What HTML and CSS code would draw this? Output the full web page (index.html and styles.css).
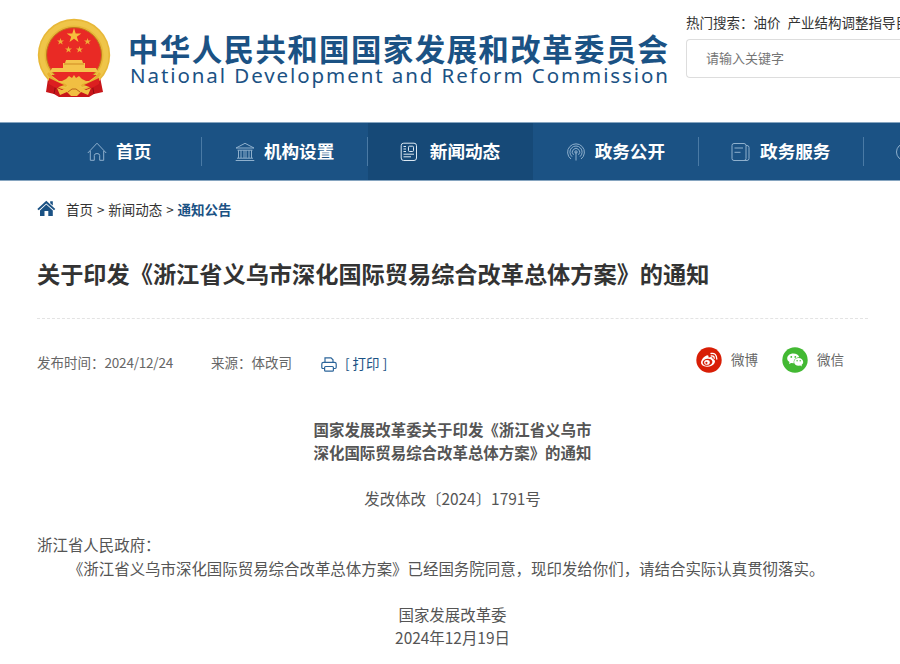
FILE: index.html
```html
<!DOCTYPE html>
<html lang="zh-CN">
<head>
    <meta charset="UTF-8">
    <meta name="viewport" content="width=device-width, initial-scale=1.0">
    <title>关于印发《浙江省义乌市深化国际贸易综合改革总体方案》的通知</title>
    <link rel="stylesheet" href="styles.css">
</head>
<body>
    <header class="header">
        <a class="logo">
            <svg class="emblem" viewBox="0 0 74 80" width="74" height="80">
                <path d="M12 54 L9 74 L17 76 L22 79 H52 L57 76 L66 74 L62 54 Z" fill="#c8161a"/>
                <path d="M12 58 L19 66 L17 76 M62 58 L55 66 L57 76" stroke="#8f0d12" stroke-width="1" fill="none"/>
                <circle cx="37" cy="37" r="36.2" fill="#e8b838"/>
                <circle cx="37" cy="37" r="32" fill="none" stroke="#efc549" stroke-width="5"/>
                <circle cx="37" cy="37" r="27.5" fill="#e92a25" stroke="#bf7a1c" stroke-width="1"/>
                <path d="M37 10 L38.7 15.4 H44.3 L39.8 18.7 L41.5 24 L37 20.7 L32.5 24 L34.2 18.7 L29.7 15.4 H35.3 Z" fill="#f6bf3c"/>
                <g fill="#f0ae38">
                    <path id="star" d="M23.5 20 L24.3 22.5 H27 L24.9 24.1 L25.7 26.5 L23.5 25 L21.3 26.5 L22.1 24.1 L20 22.5 H22.7 Z"/>
                    <use href="#star" x="27"/>
                    <use href="#star" x="8" y="8"/>
                    <use href="#star" x="19" y="8"/>
                </g>
                <path d="M29 42 H45 L46 45 H48 V50 H59 L61 54 H13 L15 50 H26 V45 H28 Z" fill="#f4c44c"/>
                <path d="M27 46 H47" stroke="#cf8a22" stroke-width="1"/>
                <path d="M14 57 H60 L52 63 H22 Z" fill="#e92a25"/>
                <path d="M12 54 Q19 66 31 66 L29 69 Q15 66 10 56 Z M62 54 Q55 66 43 66 L45 69 Q59 66 64 56 Z" fill="#e5af30"/>
                <path d="M29 61 L32 58 L35 60 L37 57 L39 60 L42 58 L45 61 L49 63 L42 69 H32 L25 63 Z" fill="#f1bf42"/>
                <path d="M12 60 L27 67 L19 70 L12 66 Z M62 60 L47 67 L55 70 L62 66 Z" fill="#dc1f20"/>
                <path d="M20 70 L25 72 L31 69 H43 L49 72 L54 70 L51 77 L44 74 L40 78 H34 L30 74 L23 77 Z" fill="#f1bf42"/>
                <path d="M31 74 L35 71 H39 L43 74" stroke="#b9651a" stroke-width="1" fill="none"/>
            </svg>
            <span class="logo-text">
                <span class="logo-cn">中华人民共和国国家发展和改革委员会</span>
                <span class="logo-en">National Development and Reform Commission</span>
            </span>
        </a>
        <div class="search">
            <div class="hot"><span>热门搜索：</span><a>油价</a><a class="hot-link">产业结构调整指导目录</a></div>
            <input class="search-input" type="text" placeholder="请输入关键字">
        </div>
    </header>

    <nav class="nav">
        <a class="nav-item">
            <svg class="nav-icon" viewBox="0 0 20 20" width="20" height="20"><path d="M.8 11 L10 1.2 L19.2 11 M3.3 9 V18.3 H7.3 V13.5 Q7.3 11.5 10 11.5 Q12.7 11.5 12.7 13.5 V18.3 H16.7 V9"/></svg>
            <span>首页</span>
        </a>
        <a class="nav-item">
            <svg class="nav-icon" viewBox="0 0 20 20" width="20" height="20"><path d="M1 6 L10 1.3 L19 6 Z M2.5 8.2 H17.5 M3.5 8.2 V16 M6 8.2 V16 M9 8.2 V16 M11 8.2 V16 M14 8.2 V16 M16.5 8.2 V16 M2 16.2 H18 M.7 18.5 H19.3"/></svg>
            <span>机构设置</span>
        </a>
        <a class="nav-item active">
            <svg class="nav-icon" viewBox="0 0 20 20" width="20" height="20"><rect x="2.2" y="1.2" width="15.3" height="17.3" rx="2.5"/><rect x="9.5" y="4.2" width="5" height="5.3" rx="1"/><path d="M4.5 4.5 H7 M4.5 7 H7 M4.5 9.5 H7 M4.5 12.2 H15 M4.5 14.8 H12"/></svg>
            <span>新闻动态</span>
        </a>
        <a class="nav-item">
            <svg class="nav-icon" viewBox="0 0 20 20" width="20" height="20"><path d="M10 10 V18.5 M5 17 A8.4 8.4 0 1 1 15 17 M6 14.7 A6.1 6.1 0 1 1 14 14.7 M7.5 12.8 A3.7 3.7 0 1 1 12.5 12.8"/><circle cx="10" cy="10" r="1.2"/></svg>
            <span>政务公开</span>
        </a>
        <a class="nav-item">
            <svg class="nav-icon" viewBox="0 0 20 20" width="20" height="20"><rect x="1" y="1.5" width="14" height="17" rx="2"/><path d="M3.5 6 H12 M3.5 10.3 H9.5 M15 3.5 H16 Q18 3.5 18 5.5 V16.5 Q18 18.5 16 18.5 H12.5"/></svg>
            <span>政务服务</span>
        </a>
        <a class="nav-item nav-last">
            <svg class="nav-icon" viewBox="0 0 20 20" width="20" height="20"><circle cx="10" cy="10" r="8.5"/></svg>
        </a>
    </nav>

    <main class="main">
        <div class="crumbs">
            <svg class="home-icon" viewBox="0 0 19 17" width="19" height="17" fill="#1b5284"><path d="M9.3 .8 L18.3 9 L17 10.3 L9.3 3.4 L1.7 10.3 L.3 9 Z"/><path d="M13.2 1.3 H15.8 V5.6 L13.2 3.3 Z"/><path d="M9.3 4.6 L15.8 10.4 V16 H11.3 V11 H7.5 V16 H3 V10.4 Z"/></svg>
            <a>首页</a><span class="sep">&gt;</span><a>新闻动态</a><span class="sep">&gt;</span><a class="current">通知公告</a>
        </div>

        <h1 class="title">关于印发《浙江省义乌市深化国际贸易综合改革总体方案》的通知</h1>

        <div class="meta">
            <span class="time">发布时间：<span class="date">2024/12/24</span></span>
            <span class="source">来源：体改司</span>
            <a class="print">
                <svg viewBox="0 0 16 15" width="16" height="15" fill="none" stroke="#2c659a" stroke-width="1.2"><path d="M4 5 V.8 H10 L12 2.8 V5 M3.5 11.5 H1.8 Q.8 11.5 .8 10.3 V7 Q.8 5.3 2.5 5.3 H13.5 Q15.2 5.3 15.2 7 V10.3 Q15.2 11.5 14.2 11.5 H12.5"/><rect x="3.6" y="9.5" width="8.8" height="4.7" rx="1"/></svg>
                <span class="print-text">[ 打印 ]</span>
            </a>
            <div class="share">
                <svg viewBox="0 0 26 26" width="26" height="26">
                    <circle cx="13" cy="13" r="12.7" fill="#d81e06"/>
                    <path d="M11 8.2 Q13 8 12.6 10.4 Q17 9 16.6 11.8 Q20 13 18.6 16 Q16 20 11 19.8 Q4.5 19.2 5 15 Q6 10.5 11 8.2 Z" fill="#fff"/>
                    <ellipse cx="11.5" cy="15.2" rx="4.9" ry="3.5" fill="#d81e06" transform="rotate(-8 11.5 15.2)"/>
                    <ellipse cx="11" cy="15.4" rx="2.8" ry="2.4" fill="#fff"/>
                    <circle cx="10.4" cy="15.8" r="1.1" fill="#d81e06"/>
                    <path d="M15 6.5 Q20.5 5.5 20.8 12 M15.2 9 Q18.3 8.6 18.2 11.3" fill="none" stroke="#fff" stroke-width="1.3" stroke-linecap="round"/>
                </svg>
                <span>微博</span>
                <svg class="wechat" viewBox="0 0 26 26" width="26" height="26">
                    <circle cx="13" cy="13" r="12.7" fill="#43b933"/>
                    <path d="M11.3 6.4 C7.8 6.4 5.2 8.6 5.2 11.3 C5.2 12.9 6 14.2 7.5 15.1 L7 17 L9.2 15.9 L11.8 16.2 C11.2 12.8 13.8 10.3 17.3 10.3 C16.8 8 14.3 6.4 11.3 6.4 Z" fill="#fff"/>
                    <path d="M16.6 11 C13.8 11 12.1 12.8 12.1 14.9 C12.1 17.1 14.1 18.8 16.6 18.8 L18.3 18.5 L20 19.5 L19.5 17.9 C20.6 17.1 21.2 16.1 21.2 14.9 C21.2 12.8 19.2 11 16.6 11 Z" fill="#fff"/>
                    <g fill="#43b933"><circle cx="9.3" cy="9.9" r=".9"/><circle cx="13.3" cy="9.9" r=".9"/><circle cx="15.1" cy="13.8" r=".7"/><circle cx="18.2" cy="13.8" r=".7"/></g>
                </svg>
                <span>微信</span>
            </div>
        </div>

        <article class="article">
            <p class="center bold">国家发展改革委关于印发《浙江省义乌市<br>深化国际贸易综合改革总体方案》的通知</p>
            <p class="center">发改体改〔2024〕1791号</p>
            <p class="to">浙江省人民政府：</p>
            <p class="indent">《浙江省义乌市深化国际贸易综合改革总体方案》已经国务院同意，现印发给你们，请结合实际认真贯彻落实。</p>
            <p class="center">国家发展改革委<br>2024年12月19日</p>
        </article>
    </main>
</body>
</html>
```

FILE: styles.css
```css
* {
    box-sizing: border-box;
}
body {
    margin: 0;
    height: 664px;
    overflow: hidden;
    background-color: #fff;
    color: #333;
    font-family: "Noto Sans CJK SC", sans-serif;
    font-size: 13.5px;
}
h1, p {
    margin: 0;
}
.header {
    display: flex;
    height: 122px;
    padding-left: 37px;
    overflow: hidden;
}
.logo {
    display: flex;
    flex: none;
    width: 649px;
    padding-top: 18px;
    color: #1b5284;
}
.emblem {
    flex: none;
}
.logo-text {
    display: flex;
    flex-direction: column;
    padding: 15px 0 0 17px;
    white-space: nowrap;
}
.logo-cn {
    font-size: 30.5px;
    font-weight: bold;
    line-height: 30px;
    letter-spacing: 1.35px;
}
.logo-en {
    padding-left: 2px;
    font-family: "Noto Sans", sans-serif;
    font-size: 20.5px;
    line-height: 24px;
    letter-spacing: 1.92px;
}
.search {
    flex: 1;
    min-width: 0;
    padding-top: 12px;
}
.hot {
    line-height: 20px;
    white-space: nowrap;
    overflow: hidden;
}
.hot-link {
    margin-left: 7px;
}
.search-input {
    display: block;
    width: 100%;
    height: 39px;
    margin-top: 7px;
    padding: 0 19px 3px;
    border: 1px solid #ddd;
    border-right: none;
    border-radius: 4px 0 0 4px;
    font-family: inherit;
    font-size: 13px;
}
.search-input::placeholder {
    color: #757575;
}
.nav {
    display: flex;
    height: 59px;
    padding-left: 37px;
    background-color: #1b5284;
    border-top: 1px solid #86a5c0;
    border-bottom: 1px solid #86a5c0;
    overflow: hidden;
}
.nav-item {
    display: flex;
    flex: none;
    align-items: center;
    justify-content: center;
    width: 165.4px;
    color: #fff;
    font-size: 17.6px;
    font-weight: bold;
    background: linear-gradient(#4a7aa5, #4a7aa5) right center / 1px 29px no-repeat;
}
.nav-item span {
    padding-bottom: 2px;
}
.nav-item.active {
    background: #164977;
}
.nav-icon {
    flex: none;
    margin-right: 9px;
    margin-left: -1px;
    fill: none;
    stroke: #8fb0cd;
    stroke-width: 1;
}
.active .nav-icon {
    margin-right: 11px;
    margin-left: -2px;
    stroke: #dce8f2;
}
.nav-last {
    flex: 1;
    justify-content: flex-start;
    min-width: 0;
    padding-left: 32px;
    background: none;
    overflow: hidden;
}
.main {
    padding: 0 32px 0 37px;
}
.crumbs {
    display: flex;
    align-items: center;
    height: 38px;
    padding-top: 17px;
    line-height: 20px;
}
.home-icon {
    margin-right: 10px;
}
.sep {
    width: 15.3px;
    text-align: center;
}
.current {
    color: #1b5284;
    font-weight: bold;
}
.title {
    height: 100px;
    padding-top: 36px;
    border-bottom: 1px dashed #e3e3e3;
    font-size: 23.2px;
    line-height: 36px;
    white-space: nowrap;
}
.meta {
    display: flex;
    align-items: center;
    height: 89px;
    padding-bottom: 3px;
    color: #666;
}
.date {
    letter-spacing: -0.2px;
}
.source {
    margin-left: 38px;
}
.print {
    display: flex;
    align-items: center;
    gap: 8px;
    margin-left: 29px;
    padding-top: 5px;
    color: #1b5284;
}
.print-text {
    padding-bottom: 3px;
}
.share {
    display: flex;
    align-items: center;
    gap: 9px;
    margin-left: auto;
    padding: 0 24px 5px 0;
}
.share span {
    padding-bottom: 2px;
}
.wechat {
    margin-left: 15px;
}
.article {
    padding-top: 9.5px;
    color: #555;
    font-size: 15.45px;
    line-height: 23.2px;
}
.article p {
    margin-bottom: 23.2px;
    white-space: nowrap;
}
.article .to {
    margin-bottom: 0;
}
.center {
    text-align: center;
}
.bold {
    font-weight: bold;
}
.indent {
    text-indent: 2em;
}
```
